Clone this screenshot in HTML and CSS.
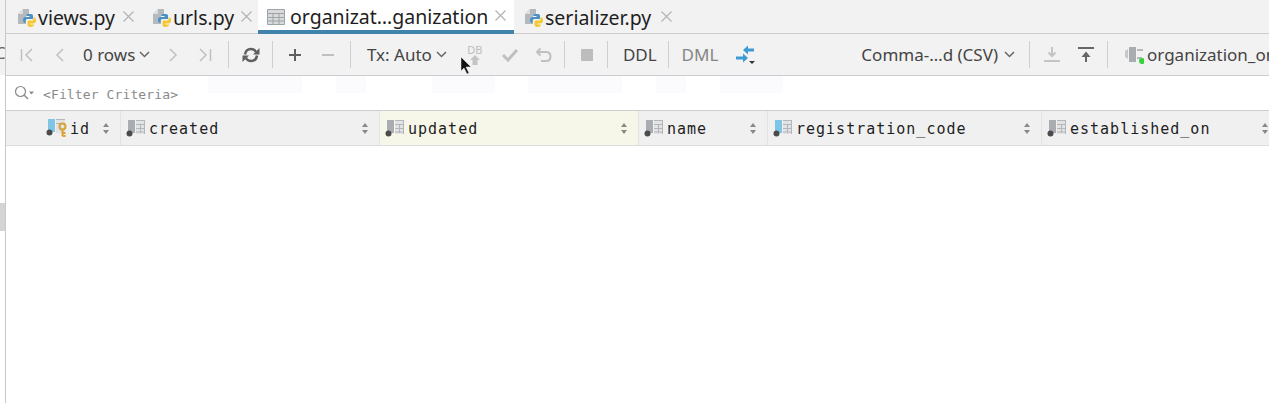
FILE: index.html
```html
<!DOCTYPE html>
<html lang="en">
<head>
<meta charset="utf-8">
<title>organization</title>
<link rel="stylesheet" href="styles.css">
</head>
<body>
<svg class="defs" width="0" height="0">
  <symbol id="py" viewBox="0 0 18 18">
    <path d="M0 5 5 0h6v7H8v8H0z" fill="#b4b9bd"/>
    <path d="M5 0v5H0z" fill="#dcdee0"/>
    <path d="M10 5h3c1.500 0 2 .8 2 2v3H9.500C8 10 7.500 11 7.500 12v2C5.500 14 5 12.500 5 11c0-2 1-3 3-3h3.500V7H8.500C8.500 5.500 9 5 10 5z" fill="#4a90c4"/>
    <path d="M15.500 8.500h1c1 0 1.500 1 1.500 3 0 1.800-1 3-3 3h-2.500v1H16c0 1.500-1.200 2.500-3 2.500-2 0-3.500-.5-3.500-2v-3c0-1 .6-1.500 1.500-1.500h3c1 0 1.500-.6 1.500-1.500z" fill="#f5c932"/>
  </symbol>
  <symbol id="col" viewBox="0 0 19 18">
    <path d="M2 1h7v13H2z" fill="#a9adb1"/>
    <path d="M10 1h9v14H10z" fill="#e2e3e4"/>
    <path d="M10 1.500h9M10 5.500h9M10 9.500h9M10 13h9M14.500 5v9M18.500 1v14" stroke="#b4b7b9" stroke-width="1" fill="none"/>
    <circle cx="3.500" cy="14.500" r="3" fill="#4b4b4b"/>
  </symbol>
  <symbol id="col-blue" viewBox="0 0 19 18">
    <path d="M2 1h7v13H2z" fill="#7fc6e6"/>
    <path d="M10 1h9v14H10z" fill="#e2e3e4"/>
    <path d="M10 1.500h9M10 5.500h9M10 9.500h9M10 13h9M14.500 5v9M18.500 1v14" stroke="#b4b7b9" stroke-width="1" fill="none"/>
    <circle cx="3.500" cy="14.500" r="3" fill="#4b4b4b"/>
  </symbol>
  <symbol id="close" viewBox="0 0 11 11">
    <path d="M.5.500l10 10M10.500.500l-10 10" stroke="#b3b3b3" stroke-width="1.200" fill="none"/>
  </symbol>
</svg>

<div class="gutter">
  <span class="gutter-glyph">C</span>
  <span class="gutter-mark"></span>
</div>

<main class="panel">
  <nav class="tabs">
    <div class="tab tab-views">
      <svg class="tab-icon" width="18" height="18"><use href="#py"/></svg>
      <span class="tab-name">views.py</span>
      <svg class="tab-close" width="11" height="11"><use href="#close"/></svg>
    </div>
    <div class="tab tab-urls">
      <svg class="tab-icon" width="18" height="18"><use href="#py"/></svg>
      <span class="tab-name">urls.py</span>
      <svg class="tab-close" width="11" height="11"><use href="#close"/></svg>
    </div>
    <div class="tab tab-active">
      <svg class="tab-icon" width="18" height="16" viewBox="0 0 18 16">
        <path d="M.5.500h17v15H.500z" fill="#d8dadc" stroke="#9ea3a7"/>
        <path d="M0 4.500h18M0 8.500h18M0 12h18M6 4v12M12 4v12" stroke="#9ea3a7" fill="none"/>
      </svg>
      <span class="tab-name">organizat…ganization</span>
      <svg class="tab-close" width="11" height="11"><use href="#close"/></svg>
    </div>
    <div class="tab tab-serializer">
      <svg class="tab-icon" width="18" height="18"><use href="#py"/></svg>
      <span class="tab-name">serializer.py</span>
      <svg class="tab-close" width="11" height="11"><use href="#close"/></svg>
    </div>
  </nav>

  <div class="toolbar">
    <span class="tool ml-5"><svg width="16" height="16" viewBox="0 0 16 16" class="ico-off"><path d="M2.500 2v12M13 2 7 8l6 6"/></svg></span>
    <span class="tool ml-1"><svg width="16" height="16" viewBox="0 0 16 16" class="ico-off"><path d="M11 2 5 8l6 6"/></svg></span>
    <span class="rows ml-7">0 rows<svg class="chev" width="11" height="7" viewBox="0 0 11 7"><path d="M1 1l4.500 4.500L10 1"/></svg></span>
    <span class="tool ml-6"><svg width="16" height="16" viewBox="0 0 16 16" class="ico-off"><path d="M5 2l6 6-6 6"/></svg></span>
    <span class="tool"><svg width="16" height="16" viewBox="0 0 16 16" class="ico-off"><path d="M13.500 2v12M3 2l6 6-6 6"/></svg></span>
    <span class="sep ml-7"></span>
    <span class="tool ml-6"><svg width="18" height="16" viewBox="0 0 18 16" class="ico-on ico-thick"><path d="M3 7.500C3.500 4 6 2 9 2c2 0 4 1 5 3M15 8.500C14.500 12 12 14 9 14c-2 0-4-1-5-3"/><path class="fill" d="M11 7.500h6.500V1zM7 8.500H.5V15z"/></svg></span>
    <span class="sep ml-5"></span>
    <span class="tool ml-6"><svg width="16" height="16" viewBox="0 0 16 16" class="ico-on"><path d="M8 2v12M2 8h12"/></svg></span>
    <span class="tool ml-1"><svg width="16" height="16" viewBox="0 0 16 16" class="ico-off ico-mid"><path d="M2 8h12"/></svg></span>
    <span class="sep ml-6"></span>
    <span class="label ml-16">Tx: Auto<svg class="chev" width="11" height="7" viewBox="0 0 11 7"><path d="M1 1l4.500 4.500L10 1"/></svg></span>
    <span class="tool tool-db"><span class="db-text">DB</span><svg width="12" height="10" viewBox="0 0 12 10"><path d="M6 0l5 5H8.500v5h-5V5H1z" fill="#c4c4c4"/></svg></span>
    <span class="tool ml-3"><svg width="18" height="16" viewBox="0 0 18 16" class="ico-off ico-heavy"><path d="M2 8l5 5L16 3"/></svg></span>
    <span class="tool ml-2"><svg width="18" height="16" viewBox="0 0 18 16" class="ico-off ico-mid"><path d="M5.500 1.500 2 5l3.500 3.500M2.500 5H11c3 0 4.500 2 4.500 4.500S14 14 11 14H6"/></svg></span>
    <span class="sep ml-4"></span>
    <span class="tool ml-6"><svg width="14" height="14" viewBox="0 0 14 14"><path d="M1 1h12v12H1z" fill="#bdbdbd"/></svg></span>
    <span class="sep ml-4"></span>
    <span class="label ml-15">DDL</span>
    <span class="sep ml-11"></span>
    <span class="label label-off ml-13">DML</span>
    <span class="tool ml-12"><svg width="22" height="24" viewBox="0 0 22 24"><path d="M8 7l5-4.500v3h6v3h-6v3z" fill="#3d9bd1"/><path d="M13 15l-5 4.500v-3H1v-3h7v-3z" fill="#3d9bd1"/><path d="M14 18h6l-3 3z" fill="#333"/></svg></span>

    <span class="label toolbar-right">Comma-…d (CSV)<svg class="chev" width="11" height="7" viewBox="0 0 11 7"><path d="M1 1l4.500 4.500L10 1"/></svg></span>
    <span class="sep ml-14"></span>
    <span class="tool ml-6"><svg width="16" height="18" viewBox="0 0 16 18"><path d="M8 1v9M4.500 6.500 8 10l3.500-3.500M0 15h16" stroke="#c4c4c4" stroke-width="2" fill="none"/></svg></span>
    <span class="tool ml-2"><svg width="16" height="18" viewBox="0 0 16 18"><path d="M0 2h16M8 16V7" stroke="#666" stroke-width="2" fill="none"/><path d="M3.500 11 8 5.500l4.500 5.500z" fill="#666"/></svg></span>
    <span class="sep ml-5"></span>
    <svg class="conn" width="19" height="18" viewBox="0 0 19 18"><path d="M0 5l3-2v10l-3-2z" fill="#c8c8c8"/><path d="M4 1h7v15H4z" fill="#a9adb1"/><path d="M12 3h6v2h-6zM12 11h5v2h-5z" fill="#b5b8bb"/><circle cx="17" cy="15" r="3" fill="#35d43a"/></svg>
    <span class="conn-name">organization_on_l</span>
  </div>

  <div class="filter">
    <svg class="filter-icon" width="20" height="16" viewBox="0 0 20 16"><circle cx="6.500" cy="6.500" r="5" fill="none" stroke="#8a8a8a" stroke-width="1.200"/><path d="M10 10l4 4" stroke="#8a8a8a" stroke-width="1.400"/><path d="M15 6.500h5l-2.500 3z" fill="#8a8a8a"/></svg>
    <span class="filter-text">&lt;Filter Criteria&gt;</span>
    <span class="ghost ghost-a"></span>
    <span class="ghost ghost-b"></span>
    <span class="ghost ghost-c"></span>
    <span class="ghost ghost-d"></span>
    <span class="ghost ghost-e"></span>
    <span class="ghost ghost-f"></span>
  </div>

  <div class="grid-head">
    <div class="col col-id">
      <svg class="key-icon" width="26" height="20" viewBox="0 0 26 20">
        <path d="M2 1h7v13H2z" fill="#7fc6e6"/><path d="M10 1h9v14H10z" fill="#e2e3e4"/>
        <path d="M10 1.500h9M10 5.500h9" stroke="#b4b7b9" fill="none"/>
        <circle cx="3.500" cy="14.500" r="3" fill="#4b4b4b"/>
        <circle cx="16.500" cy="8.500" r="3" fill="none" stroke="#d9a233" stroke-width="2"/>
        <path d="M16.500 11v7M16.500 15h3M16.500 18h3" stroke="#d9a233" stroke-width="2" fill="none"/>
      </svg>
      <span class="col-name">id</span>
      <span class="sort"></span>
    </div>
    <div class="col col-created">
      <svg class="col-icon" width="19" height="18"><use href="#col"/></svg>
      <span class="col-name">created</span>
      <span class="sort"></span>
    </div>
    <div class="col col-updated">
      <svg class="col-icon" width="19" height="18"><use href="#col"/></svg>
      <span class="col-name">updated</span>
      <span class="sort"></span>
    </div>
    <div class="col col-nm">
      <svg class="col-icon" width="19" height="18"><use href="#col"/></svg>
      <span class="col-name">name</span>
      <span class="sort"></span>
    </div>
    <div class="col col-reg">
      <svg class="col-icon" width="19" height="18"><use href="#col-blue"/></svg>
      <span class="col-name">registration_code</span>
      <span class="sort"></span>
    </div>
    <div class="col col-est">
      <svg class="col-icon" width="19" height="18"><use href="#col"/></svg>
      <span class="col-name">established_on</span>
      <span class="sort"></span>
    </div>
  </div>
</main>

<svg class="cursor" width="12" height="18" viewBox="0 0 12 18"><path d="M1 0v14l3-3 3 6 2-1-3-6h5z" fill="#111" stroke="#eee" stroke-width=".5"/></svg>
</body>
</html>
```
FILE: styles.css
```css
* { box-sizing: border-box; }
html, body { margin: 0; height: 100%; overflow: hidden; background: #fff; }
body {
  display: flex;
  width: 1269px;
  height: 403px;
  font-family: "Noto Sans", "Liberation Sans", sans-serif;
  position: relative;
}
.defs { position: absolute; }

.gutter {
  width: 6px;
  flex: none;
  border-right: 1px solid #c9c9c9;
  background: linear-gradient(#f2f2f2 0 75px, #fff 75px);
  position: relative;
  overflow: hidden;
}
.gutter-glyph {
  position: absolute;
  left: -5px;
  top: 42px;
  font-size: 17px;
  line-height: 22px;
  color: #666;
}
.gutter-mark {
  position: absolute;
  left: 0;
  top: 203px;
  width: 5px;
  height: 28px;
  background: #d4d4d4;
}

.panel { flex: 1; min-width: 0; display: flex; flex-direction: column; overflow: hidden; }

/* Tabs */
.tabs {
  height: 34px;
  flex: none;
  display: flex;
  background: #f2f2f2;
  border-bottom: 1px solid #cdcdcd;
}
.tab { display: flex; align-items: center; height: 33px; font-size: 19.500px; color: #1e1e1e; padding-top: 2px; }
.tab-icon { flex: none; margin-right: 2px; }
.tab-name { white-space: nowrap; }
.tab-close { flex: none; position: relative; top: -1px; }
.tab-views { width: 135px; padding-left: 12px; }
.tab-views .tab-name { width: 79px; margin-right: 6px; }
.tab-urls { width: 117px; padding-left: 12px; }
.tab-urls .tab-name { width: 61px; margin-right: 7px; }
.tab-active { width: 256px; padding: 3px 0 0 9px; background: #fff; height: 34px; margin-bottom: -1px; border-bottom: 4px solid #4083ad; }
.tab-active .tab-icon { margin-right: 5px; }
.tab-active .tab-name { width: 198px; margin-right: 7px; }
.tab-serializer { padding-left: 11px; }
.tab-serializer .tab-name { width: 108px; margin-right: 8px; }

/* Toolbar */
.toolbar {
  height: 42px;
  flex: none;
  display: flex;
  align-items: center;
  background: #f2f2f2;
  border-bottom: 1px solid #cdcdcd;
  color: #444;
  font-size: 17px;
  white-space: nowrap;
}
.tool { width: 32px; height: 32px; flex: none; display: flex; align-items: center; justify-content: center; }
.sep { width: 1px; height: 27px; background: #cfcfcf; flex: none; }
.ml-1 { margin-left: 1px; }
.ml-2 { margin-left: 2px; }
.ml-3 { margin-left: 3px; }
.ml-4 { margin-left: 4px; }
.ml-5 { margin-left: 5px; }
.ml-6 { margin-left: 6px; }
.ml-7 { margin-left: 7px; }
.ml-11 { margin-left: 11px; }
.ml-12 { margin-left: 12px; }
.ml-13 { margin-left: 13px; }
.ml-14 { margin-left: 14px; }
.ml-15 { margin-left: 15px; }
.ml-16 { margin-left: 16px; }
.ico-off, .ico-on { fill: none; stroke-width: 1.500; }
.ico-off { stroke: #c0c0c0; }
.ico-on { stroke: #5f5f5f; stroke-width: 2; }
.ico-on .fill { fill: #5f5f5f; stroke: none; }
.ico-mid { stroke-width: 2; }
.ico-heavy { stroke-width: 3; }
.ico-thick { stroke-width: 2.500; }
.rows { width: 68px; flex: none; display: flex; align-items: center; gap: 4px; }
.label { flex: none; display: flex; align-items: center; gap: 4px; }
.label-off { color: #858585; }
.chev { fill: none; stroke: #666; stroke-width: 1.500; flex: none; }
.tool-db { flex-direction: column; gap: 0; margin-left: 12px; width: 32px; }
.db-text { font-size: 11px; line-height: 11px; color: #bdbdbd; }
.toolbar-right { margin-left: 99px; gap: 6px; }
.conn { flex: none; margin-left: 17px; }
.conn-name { margin-left: 3px; }

/* Filter */
.filter {
  height: 35px;
  flex: none;
  display: flex;
  align-items: center;
  padding-left: 8px;
  background: #fff;
  border-bottom: 1px solid #cdcdcd;
  position: relative;
}
.filter-icon { flex: none; margin-right: 9px; }
.filter-text { font-family: "DejaVu Sans Mono", monospace; font-size: 13px; letter-spacing: .12px; color: #8a8a8a; position: relative; top: 1px; }
.ghost { position: absolute; top: 0; height: 17px; background: #fbfafc; }
.ghost-a { left: 202px; width: 94px; }
.ghost-b { left: 330px; width: 30px; }
.ghost-c { left: 426px; width: 63px; }
.ghost-d { left: 522px; width: 94px; }
.ghost-e { left: 650px; width: 30px; }
.ghost-f { left: 714px; width: 63px; }

/* Grid header */
.grid-head {
  height: 35px;
  flex: none;
  display: flex;
  background: #f0f0f0;
  border-bottom: 1px solid #dcdcdc;
}
.col {
  flex: none;
  display: flex;
  align-items: center;
  border-right: 1px solid #e3e3e3;
  padding-left: 5px;
  padding-right: 10px;
}
.col-id { width: 115px; padding-left: 40px; }
.col-created { width: 259px; }
.col-updated { width: 259px; background: #f7f7e9; }
.col-nm { width: 129px; }
.col-reg { width: 274px; }
.col-est { width: 240px; border-right: 0; padding-right: 13px; }
.key-icon { flex: none; margin-right: -2px; }
.col-icon { flex: none; margin-right: 4px; }
.col-name {
  font-family: "DejaVu Sans Mono", monospace;
  font-size: 15px;
  letter-spacing: 1px;
  color: #1e1e1e;
  flex: 1;
  white-space: nowrap;
  position: relative;
  top: 1px;
}
.sort { width: 7px; height: 11px; flex: none; position: relative; }
.sort::before, .sort::after {
  content: "";
  position: absolute;
  left: 0;
  border-left: 3.500px solid transparent;
  border-right: 3.500px solid transparent;
}
.sort::before { top: 0; border-bottom: 4px solid #888; }
.sort::after { bottom: 0; border-top: 4px solid #888; }

.cursor { position: absolute; left: 460px; top: 57px; }
```
